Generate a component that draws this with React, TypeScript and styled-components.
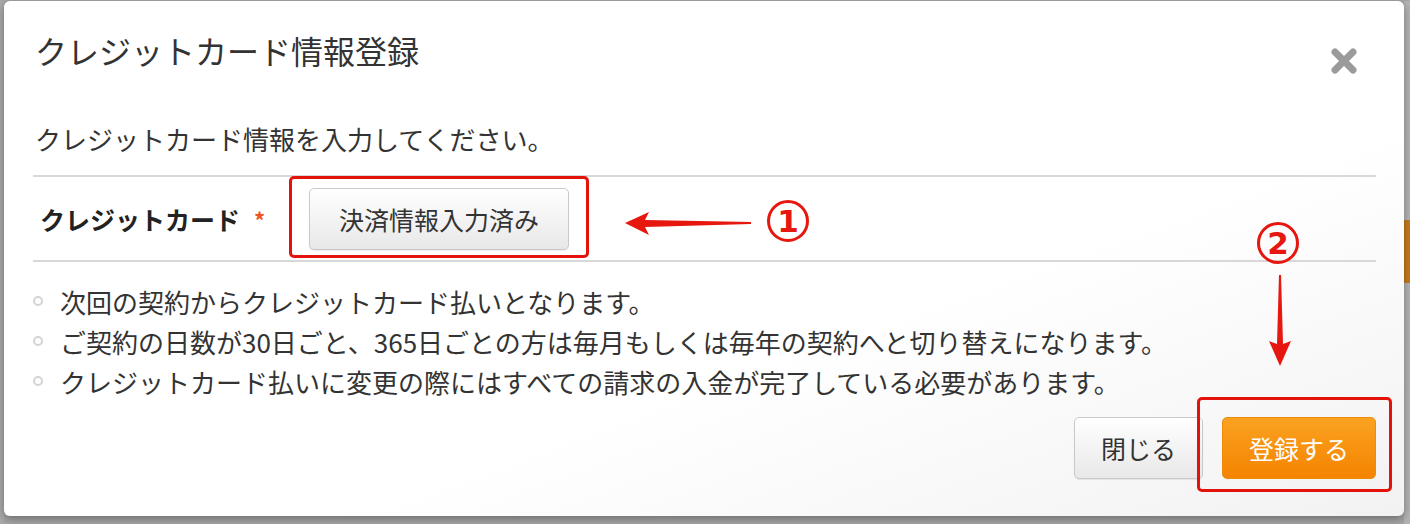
import styled, { createGlobalStyle } from "styled-components";

const GlobalStyle = createGlobalStyle`
  html, body {
    margin: 0;
    padding: 0;
    background: #a6a6a6;
  }
  body {
    font-family: "Noto Sans CJK JP", "Noto Sans", sans-serif;
    color: #333;
  }
  * {
    box-sizing: border-box;
  }
`;

const notes = [
  "次回の契約からクレジットカード払いとなります。",
  "ご契約の日数が30日ごと、365日ごとの方は毎月もしくは毎年の契約へと切り替えになります。",
  "クレジットカード払いに変更の際にはすべての請求の入金が完了している必要があります。",
];

const App = () => {
  return (
    <>
      <GlobalStyle />
      <Page>
        <LeftStrip />
        <Modal>
          <Header>
            <Title>クレジットカード情報登録</Title>
            <CloseBtn aria-label="close">
              <svg width="26" height="26" viewBox="0 0 26 26">
                <path
                  d="M4 4 L22 22 M22 4 L4 22"
                  stroke="#9b9b9b"
                  strokeWidth="7"
                  strokeLinecap="round"
                />
              </svg>
            </CloseBtn>
          </Header>

          <Intro>クレジットカード情報を入力してください。</Intro>
          <Divider />

          <FormRow>
            <Label>
              クレジットカード
              <Required>*</Required>
            </Label>
            <GrayBtn $padX={29}>決済情報入力済み</GrayBtn>
          </FormRow>
          <Divider />

          <NoteList>
            {notes.map((n) => (
              <NoteItem key={n}>{n}</NoteItem>
            ))}
          </NoteList>

          <Footer>
            <GrayBtn $padX={26}>閉じる</GrayBtn>
            <PrimaryBtn>登録する</PrimaryBtn>
          </Footer>

          {/* 注釈レイヤー */}
          <RedFrame $left={285} $top={175} $width={300} $height={82} />
          <RedFrame $left={1193} $top={396} $width={195} $height={95} />

          <ArrowLeft width="132" height="28" viewBox="0 0 132 28">
            <polygon
              points="5,13 29,2 25,10 131,12 131,14 25,17 29,25"
              fill="#e5170f"
            />
          </ArrowLeft>
          <StepBadge $left={763} $top={199}>1</StepBadge>

          <StepBadge $left={1253} $top={221}>2</StepBadge>
          <ArrowDown width="26" height="96" viewBox="0 0 26 96">
            <polygon
              points="13,93 2,68 10,71 12,2 14,2 16,71 24,68"
              fill="#e5170f"
            />
          </ArrowDown>
        </Modal>
        <RightStrip>
          <OrangeTab />
        </RightStrip>
      </Page>
    </>
  );
};

const Page = styled.div`
  display: flex;
  align-items: flex-start;
  width: 1410px;
  height: 524px;
  padding-top: 1px;
  overflow: hidden;
`;

const LeftStrip = styled.div`
  width: 4px;
  height: 524px;
  flex-shrink: 0;
  background: #a9a9a9;
`;

const RightStrip = styled.div`
  width: 6px;
  height: 524px;
  flex-shrink: 0;
  background: #b3b3b3;
`;

const OrangeTab = styled.div`
  margin-top: 219px;
  height: 63px;
  background: #c67a1c;
`;

// モーダル本体
const Modal = styled.div`
  position: relative;
  width: 1400px;
  height: 515px;
  flex-shrink: 0;
  padding: 0 28px 0 29px;
  border-radius: 6px;
  background: linear-gradient(160deg, #ffffff 62%, #f2f2f2 100%);
  box-shadow: 0 3px 8px rgba(0, 0, 0, 0.35);
`;

const Header = styled.div`
  display: flex;
  justify-content: space-between;
  align-items: flex-start;
  height: 73px;
  padding-top: 27px;
`;

const Title = styled.h2`
  margin: 0 0 0 2px;
  font-size: 32px;
  font-weight: 400;
  line-height: 44px;
  color: #333;
`;

const CloseBtn = styled.div`
  display: flex;
  width: 26px;
  height: 26px;
  margin: 20px 19px 0 0;
  cursor: pointer;
`;

const Intro = styled.p`
  margin: 47px 0 0 2px;
  font-size: 26px;
  line-height: 36px;
`;

const Divider = styled.div`
  height: 2px;
  background: #d8d8d8;
  margin-top: 18px;
`;

const FormRow = styled.div`
  display: flex;
  align-items: center;
  height: 83px;
  padding-left: 7px;
  & + ${Divider} {
    margin-top: 0;
  }
`;

const Label = styled.div`
  display: flex;
  align-items: center;
  width: 269px;
  font-size: 25px;
  font-weight: 700;
  color: #222;
`;

const Required = styled.span`
  margin-left: 14px;
  font-size: 22px;
  color: #f0541e;
`;

const GrayBtn = styled.button<{ $padX: number }>`
  height: 62px;
  padding: 0 ${(p) => p.$padX}px;
  font-family: inherit;
  font-size: 25px;
  color: #333;
  background: linear-gradient(#ffffff, #e8e8e8);
  border: 1px solid #c9c9c9;
  border-radius: 5px;
  box-shadow: 0 1px 1px rgba(0, 0, 0, 0.08);
  cursor: pointer;
`;

const PrimaryBtn = styled.button`
  height: 62px;
  padding: 0 26px;
  font-family: inherit;
  font-size: 25px;
  color: #fff;
  background: linear-gradient(#faa221, #f58400);
  border: 1px solid #ee8c0a;
  border-radius: 5px;
  cursor: pointer;
`;

const NoteList = styled.ul`
  list-style: none;
  margin: 0;
  padding: 19px 0 0 0;
`;

const NoteItem = styled.li`
  display: flex;
  align-items: center;
  height: 40px;
  font-size: 26px;
  &::before {
    content: "";
    width: 10px;
    height: 10px;
    margin-right: 17px;
    border-radius: 50%;
    border: 2px solid #d4d4d4;
    box-sizing: border-box;
    flex-shrink: 0;
  }
`;

const Footer = styled.div`
  display: flex;
  justify-content: flex-end;
  gap: 19px;
  margin-top: 16px;
`;

// 赤枠の注釈
const RedFrame = styled.div<{
  $left: number;
  $top: number;
  $width: number;
  $height: number;
}>`
  position: absolute;
  left: ${(p) => p.$left}px;
  top: ${(p) => p.$top}px;
  width: ${(p) => p.$width}px;
  height: ${(p) => p.$height}px;
  border: 3px solid #e3130c;
  border-radius: 5px;
  pointer-events: none;
`;

const StepBadge = styled.div<{ $left: number; $top: number }>`
  position: absolute;
  left: ${(p) => p.$left}px;
  top: ${(p) => p.$top}px;
  width: 42px;
  height: 42px;
  display: flex;
  align-items: center;
  justify-content: center;
  border: 3px solid #e5170f;
  border-radius: 50%;
  font-family: "DejaVu Sans", sans-serif;
  font-size: 31px;
  font-weight: 700;
  line-height: 1;
  color: #e5170f;
`;

const ArrowLeft = styled.svg`
  position: absolute;
  left: 616px;
  top: 209px;
`;

const ArrowDown = styled.svg`
  position: absolute;
  left: 1263px;
  top: 272px;
`;

export default App;
